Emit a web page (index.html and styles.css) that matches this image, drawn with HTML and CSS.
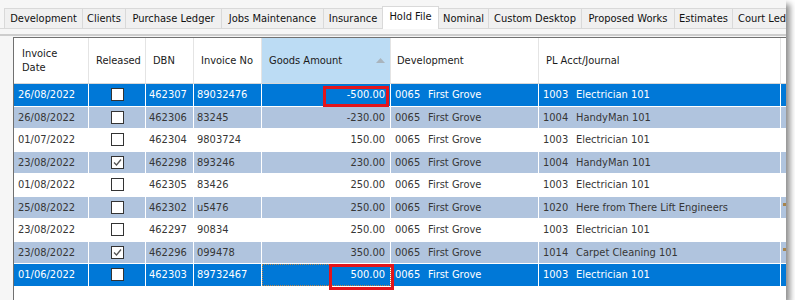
FILE: index.html
```html
<!DOCTYPE html>
<html lang="en">
<head>
<meta charset="utf-8">
<title>Hold File</title>
<link rel="stylesheet" href="styles.css">
</head>
<body>
<div class="window">
  <div class="tabs">
    <div class="tab w-dev">Development</div>
    <div class="tab w-cli">Clients</div>
    <div class="tab w-pl">Purchase Ledger</div>
    <div class="tab w-jobs">Jobs Maintenance</div>
    <div class="tab w-ins">Insurance</div>
    <div class="tab active w-hold">Hold File</div>
    <div class="tab w-nom">Nominal</div>
    <div class="tab w-cust">Custom Desktop</div>
    <div class="tab w-prop">Proposed Works</div>
    <div class="tab w-est">Estimates</div>
    <div class="tab w-court">Court Ledger</div>
  </div>
  <div class="page">
    <div class="rule"></div>
    <div class="grid">
      <div class="row head">
        <div class="cell first">Invoice<br>Date</div>
        <div class="cell">Released</div>
        <div class="cell">DBN</div>
        <div class="cell">Invoice No</div>
        <div class="cell sorted"><span>Goods Amount</span><svg class="arrow" width="9" height="5" viewBox="0 0 9 5"><polygon points="0,5 4.5,0 9,5" fill="#a9b4bd"/></svg></div>
        <div class="cell dev-h">Development</div>
        <div class="cell">PL Acct/Journal</div>
        <div class="cell"></div>
      </div>

      <div class="row data sel">
        <div class="cell date">26/08/2022</div>
        <div class="cell chk"><span class="box"></span></div>
        <div class="cell">462307</div>
        <div class="cell">89032476</div>
        <div class="cell num">-500.00</div>
        <div class="cell pair dev"><span class="code">0065</span>First Grove</div>
        <div class="cell pair"><span class="code">1003</span>Electrician 101</div>
        <div class="cell last"></div>
      </div>
      <div class="row data alt">
        <div class="cell date">26/08/2022</div>
        <div class="cell chk"><span class="box"></span></div>
        <div class="cell">462306</div>
        <div class="cell">83245</div>
        <div class="cell num">-230.00</div>
        <div class="cell pair dev"><span class="code">0065</span>First Grove</div>
        <div class="cell pair"><span class="code">1004</span>HandyMan 101</div>
        <div class="cell last"></div>
      </div>
      <div class="row data">
        <div class="cell date">01/07/2022</div>
        <div class="cell chk"><span class="box"></span></div>
        <div class="cell">462304</div>
        <div class="cell">9803724</div>
        <div class="cell num">150.00</div>
        <div class="cell pair dev"><span class="code">0065</span>First Grove</div>
        <div class="cell pair"><span class="code">1003</span>Electrician 101</div>
        <div class="cell last"></div>
      </div>
      <div class="row data alt">
        <div class="cell date">23/08/2022</div>
        <div class="cell chk"><span class="box"><svg width="11" height="11" viewBox="0 0 11 11"><polyline points="2,5.5 4.5,8 9,2.5" fill="none" stroke="#555" stroke-width="1.3"/></svg></span></div>
        <div class="cell">462298</div>
        <div class="cell">893246</div>
        <div class="cell num">230.00</div>
        <div class="cell pair dev"><span class="code">0065</span>First Grove</div>
        <div class="cell pair"><span class="code">1004</span>HandyMan 101</div>
        <div class="cell last"></div>
      </div>
      <div class="row data">
        <div class="cell date">01/08/2022</div>
        <div class="cell chk"><span class="box"></span></div>
        <div class="cell">462305</div>
        <div class="cell">83426</div>
        <div class="cell num">250.00</div>
        <div class="cell pair dev"><span class="code">0065</span>First Grove</div>
        <div class="cell pair"><span class="code">1003</span>Electrician 101</div>
        <div class="cell last"></div>
      </div>
      <div class="row data alt">
        <div class="cell date">25/08/2022</div>
        <div class="cell chk"><span class="box"></span></div>
        <div class="cell">462302</div>
        <div class="cell">u5476</div>
        <div class="cell num">250.00</div>
        <div class="cell pair dev"><span class="code">0065</span>First Grove</div>
        <div class="cell pair"><span class="code">1020</span>Here from There Lift Engineers</div>
        <div class="cell last"><span class="flag"></span></div>
      </div>
      <div class="row data">
        <div class="cell date">23/08/2022</div>
        <div class="cell chk"><span class="box"></span></div>
        <div class="cell">462297</div>
        <div class="cell">90834</div>
        <div class="cell num">250.00</div>
        <div class="cell pair dev"><span class="code">0065</span>First Grove</div>
        <div class="cell pair"><span class="code">1003</span>Electrician 101</div>
        <div class="cell last"></div>
      </div>
      <div class="row data alt">
        <div class="cell date">23/08/2022</div>
        <div class="cell chk"><span class="box"><svg width="11" height="11" viewBox="0 0 11 11"><polyline points="2,5.5 4.5,8 9,2.5" fill="none" stroke="#555" stroke-width="1.3"/></svg></span></div>
        <div class="cell">462296</div>
        <div class="cell">099478</div>
        <div class="cell num">350.00</div>
        <div class="cell pair dev"><span class="code">0065</span>First Grove</div>
        <div class="cell pair"><span class="code">1014</span>Carpet Cleaning 101</div>
        <div class="cell last"><span class="flag"></span></div>
      </div>
      <div class="row data sel">
        <div class="cell date">01/06/2022</div>
        <div class="cell chk"><span class="box"></span></div>
        <div class="cell">462303</div>
        <div class="cell">89732467</div>
        <div class="cell num focus">500.00</div>
        <div class="cell pair dev"><span class="code">0065</span>First Grove</div>
        <div class="cell pair"><span class="code">1003</span>Electrician 101</div>
        <div class="cell last"></div>
      </div>
    </div>
  </div>
  <div class="mark mark-top"></div>
  <div class="mark mark-bottom"></div>
</div>
</body>
</html>
```
FILE: styles.css
```css
body {
  margin: 0;
  background: #ffffff;
  font-family: "DejaVu Sans Condensed", "DejaVu Sans", "Noto Sans", sans-serif;
  font-stretch: condensed;
  font-size: 11px;
  color: #222;
}

.window {
  position: relative;
  width: 786px;
  height: 300px;
  background: #f6f6f6;
  box-shadow: 4px 4px 6px rgba(0, 0, 0, 0.45);
  overflow: hidden;
}

/* Tabs */
.tabs {
  display: flex;
  align-items: flex-end;
  height: 28px;
  box-sizing: border-box;
  padding-left: 4px;
  position: relative;
  z-index: 2;
}
.tab {
  flex: none;
  box-sizing: border-box;
  height: 20px;
  border: 1px solid #d9d9d9;
  border-bottom: none;
  margin-right: -1px;
  background: #f0f0f0;
  display: flex;
  align-items: center;
  justify-content: center;
  white-space: nowrap;
  color: #111;
}
.tab.active {
  height: 23px;
  margin-bottom: -1px;
  background: #ffffff;
  align-items: flex-start;
  padding-top: 3px;
  position: relative;
  z-index: 3;
}
.w-dev { width: 79px; }
.w-cli { width: 44px; }
.w-pl { width: 97px; }
.w-jobs { width: 103px; }
.w-ins { width: 60px; }
.w-hold { width: 57px; }
.w-nom { width: 51px; }
.w-cust { width: 94px; }
.w-prop { width: 94px; }
.w-est { width: 59px; }
.w-court { width: 80px; justify-content: flex-start; padding-left: 5px; }

/* Page */
.page {
  border-top: 1px solid #d9d9d9;
  padding-left: 13px;
  height: 272px;
  box-sizing: border-box;
}
.rule {
  margin-left: -13px;
  margin-top: 5px;
  height: 2px;
  background: #cdcdcd;
}
.grid {
  margin-top: 1px;
  width: 800px;
  height: 263px;
  background: #ffffff;
  border-left: 1px solid #707070;
  border-top: 1px solid #707070;
}

/* Rows */
.row {
  display: grid;
  grid-template-columns: 75px 57px 48px 68px 129px 148px 242px 40px;
}
.cell {
  box-sizing: border-box;
  border-right: 1px solid #ffffff;
  padding: 0 3px;
  display: flex;
  align-items: center;
  white-space: nowrap;
  overflow: hidden;
}
.head {
  height: 46px;
  box-sizing: border-box;
  border-bottom: 1px solid #d8d8d8;
  color: #1a1a1a;
}
.head .cell {
  border-right-color: #e4e4e4;
  padding-left: 7px;
  line-height: 14px;
}
.head .first { padding-left: 8px; }
.head .dev-h { padding-left: 6px; }
.head .sorted {
  background: #bcdcf4;
  justify-content: space-between;
  padding-right: 5px;
}
.arrow { flex: none; margin-top: -1px; }

.data {
  height: 22.5px;
  box-sizing: border-box;
  border-bottom: 1px solid #ffffff;
  color: #363636;
}
.alt { background: #b0c4de; }
.sel { background: #0078d7; color: #ffffff; }

.date { padding-left: 4px; }
.num { justify-content: flex-end; padding-right: 5px; }
.dev { padding-left: 2px; }
.pair { padding-left: 4px; }
.code { flex: none; width: 33px; }
.last { padding: 0; }

.chk { justify-content: center; }
.box {
  width: 13px;
  height: 13px;
  box-sizing: border-box;
  border: 1px solid #333;
  background: #ffffff;
  display: flex;
  align-items: center;
  justify-content: center;
}

.focus {
  outline: 1px dotted #b8864b;
  outline-offset: -1px;
}

.flag {
  width: 3px;
  height: 3px;
  margin-left: 2px;
  margin-top: -5px;
  background: #a8844c;
}

/* Annotation boxes */
.mark {
  position: absolute;
  box-sizing: border-box;
  border: 3px solid #e3151b;
  z-index: 5;
}
.mark-top { left: 323px; top: 86px; width: 66px; height: 21px; }
.mark-bottom { left: 329px; top: 264px; width: 65px; height: 26px; }
```
